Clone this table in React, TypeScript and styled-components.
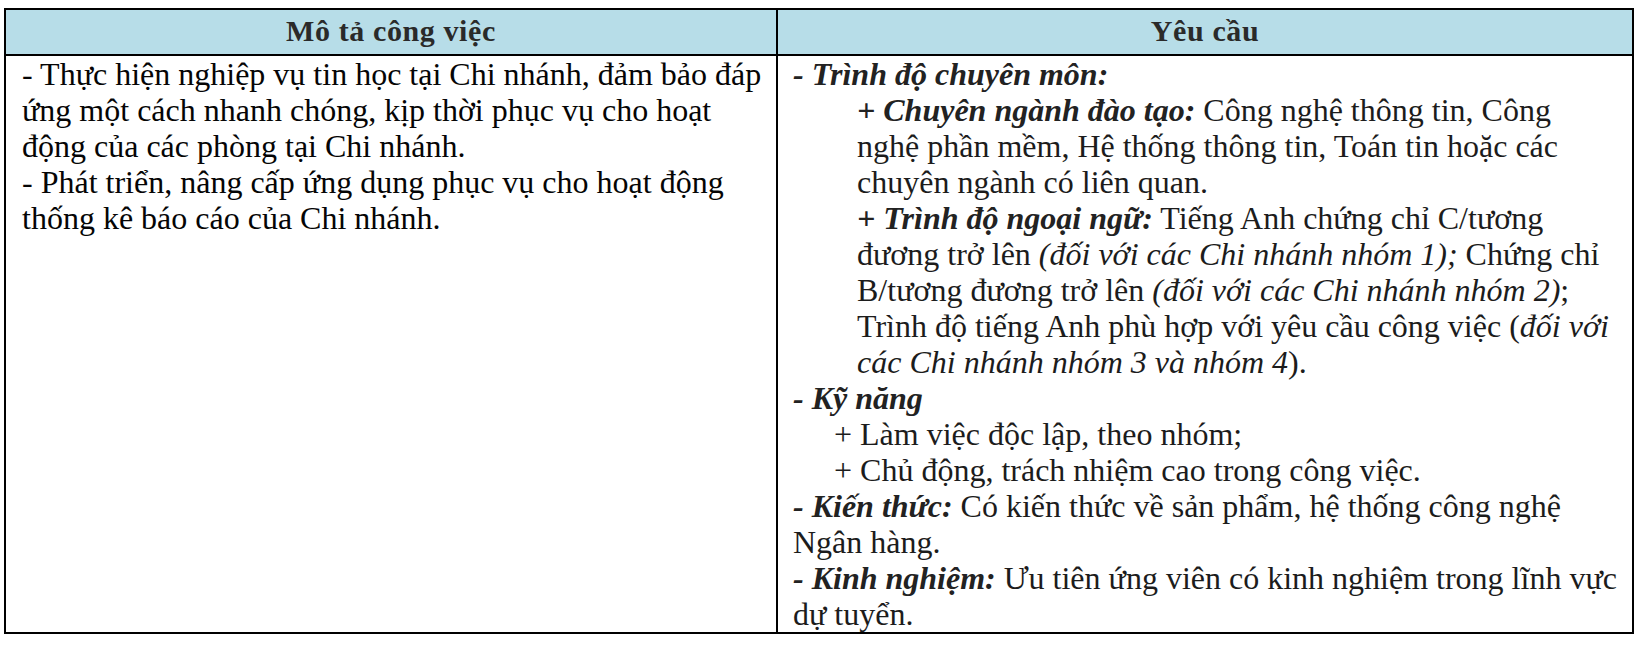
import styled, { createGlobalStyle } from 'styled-components';

const GlobalStyle = createGlobalStyle`
	html, body {
		margin: 0;
		padding: 0;
		background: #ffffff;
	}
	body {
		font-family: "Liberation Serif", "Times New Roman", serif;
		color: #111111;
	}
`;

const Page = styled.div`
	width: 1646px;
	height: 648px;
	overflow: hidden;
	background: #ffffff;
	padding-top: 8px;
	box-sizing: border-box;
`;

const Table = styled.div`
	margin-left: 4px;
	width: 1630px;
	box-sizing: border-box;
	border: 2px solid #000000;
	display: grid;
	grid-template-columns: 772px 1fr;
`;

const HeadCell = styled.div<{ $last?: boolean }>`
	height: 46px;
	box-sizing: border-box;
	background: #b7dde8;
	border-bottom: 2px solid #000000;
	border-right: ${p => (p.$last ? 'none' : '2px solid #000000')};
	display: flex;
	align-items: center;
	justify-content: center;
	font-size: 30px;
	font-weight: bold;
	color: #2a2a2a;
	letter-spacing: 0.6px;
	padding-bottom: 2px;
`;

const BodyCell = styled.div<{ $last?: boolean; $pad: number }>`
	box-sizing: border-box;
	border-right: ${p => (p.$last ? 'none' : '2px solid #000000')};
	padding-left: ${p => p.$pad}px;
	font-size: 32px;
	line-height: 36px;
	color: ${p => (p.$last ? '#1c1c1c' : '#050505')};
`;

const Line = styled.div<{ $indent?: number }>`
	white-space: nowrap;
	padding-left: ${p => p.$indent ?? 0}px;
`;

const Label = styled.span`
	font-weight: bold;
	font-style: italic;
	color: #222222;
`;

const Note = styled.span`
	font-style: italic;
`;

const App = () => {
	return (
		<>
			<GlobalStyle />
			<Page>
				<Table>
					<HeadCell>Mô tả công việc</HeadCell>
					<HeadCell $last>Yêu cầu</HeadCell>

					<BodyCell $pad={16}>
						<Line>- Thực hiện nghiệp vụ tin học tại Chi nhánh, đảm bảo đáp</Line>
						<Line>ứng một cách nhanh chóng, kịp thời phục vụ cho hoạt</Line>
						<Line>động của các phòng tại Chi nhánh.</Line>
						<Line>- Phát triển, nâng cấp ứng dụng phục vụ cho hoạt động</Line>
						<Line>thống kê báo cáo của Chi nhánh.</Line>
					</BodyCell>

					<BodyCell $last $pad={15}>
						<Line><Label>- Trình độ chuyên môn:</Label></Line>
						<Line $indent={64}><Label>+ Chuyên ngành đào tạo:</Label> Công nghệ thông tin, Công</Line>
						<Line $indent={64}>nghệ phần mềm, Hệ thống thông tin, Toán tin hoặc các</Line>
						<Line $indent={64}>chuyên ngành có liên quan.</Line>
						<Line $indent={64}><Label>+ Trình độ ngoại ngữ:</Label> Tiếng Anh chứng chỉ C/tương</Line>
						<Line $indent={64}>đương trở lên <Note>(đối với các Chi nhánh nhóm 1);</Note> Chứng chỉ</Line>
						<Line $indent={64}>B/tương đương trở lên <Note>(đối với các Chi nhánh nhóm 2)</Note>;</Line>
						<Line $indent={64}>Trình độ tiếng Anh phù hợp với yêu cầu công việc (<Note>đối với</Note></Line>
						<Line $indent={64}><Note>các Chi nhánh nhóm 3 và nhóm 4</Note>).</Line>
						<Line><Label>- Kỹ năng</Label></Line>
						<Line $indent={41}>+ Làm việc độc lập, theo nhóm;</Line>
						<Line $indent={41}>+ Chủ động, trách nhiệm cao trong công việc.</Line>
						<Line><Label>- Kiến thức:</Label> Có kiến thức về sản phẩm, hệ thống công nghệ</Line>
						<Line>Ngân hàng.</Line>
						<Line><Label>- Kinh nghiệm:</Label> Ưu tiên ứng viên có kinh nghiệm trong lĩnh vực</Line>
						<Line>dự tuyển.</Line>
					</BodyCell>
				</Table>
			</Page>
		</>
	);
};

export default App;
